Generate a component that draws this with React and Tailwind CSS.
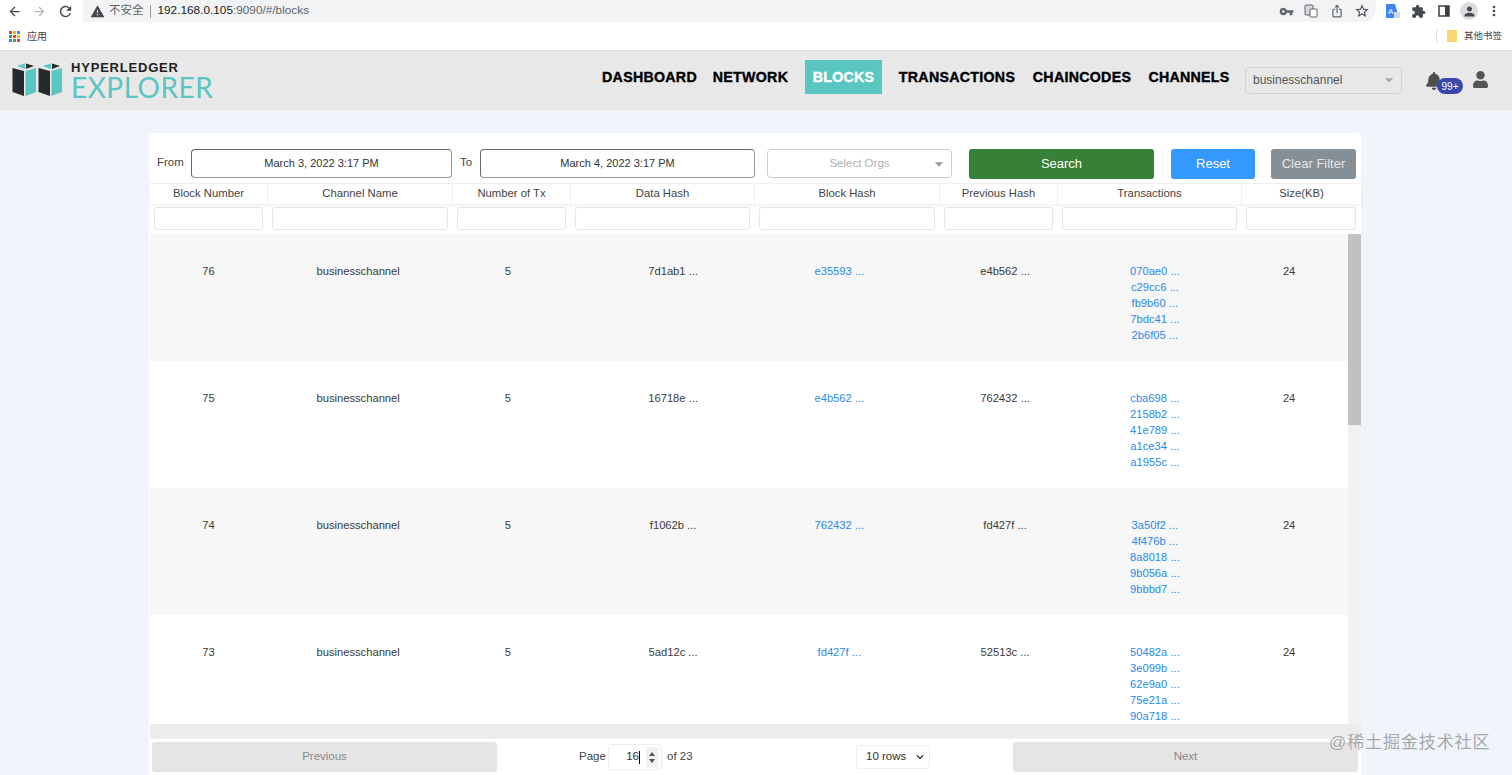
import React from "react";
import { MdArrowBack, MdArrowForward, MdRefresh, MdWarning, MdVpnKey, MdStarBorder, MdExtension, MdPerson, MdMoreVert, MdArrowDropDown, MdOutlineIosShare, MdKeyboardArrowDown } from "react-icons/md";
import { FaBell, FaUser } from "react-icons/fa";

const sans = "font-['Liberation_Sans','Noto_Sans_CJK_SC',sans-serif]";

const columns = ["Block Number", "Channel Name", "Number of Tx", "Data Hash", "Block Hash", "Previous Hash", "Transactions", "Size(KB)"];
const headWidths = ["w-[118px]", "w-[185px]", "w-[118px]", "w-[184px]", "w-[185px]", "w-[118px]", "w-[184px]", "w-[119px]"];

const rows = [
  { block: 76, data: "7d1ab1 ...", hash: "e35593 ...", prev: "e4b562 ...", txs: ["070ae0 ...", "c29cc6 ...", "fb9b60 ...", "7bdc41 ...", "2b6f05 ..."] },
  { block: 75, data: "16718e ...", hash: "e4b562 ...", prev: "762432 ...", txs: ["cba698 ...", "2158b2 ...", "41e789 ...", "a1ce34 ...", "a1955c ..."] },
  { block: 74, data: "f1062b ...", hash: "762432 ...", prev: "fd427f ...", txs: ["3a50f2 ...", "4f476b ...", "8a8018 ...", "9b056a ...", "9bbbd7 ..."] },
  { block: 73, data: "5ad12c ...", hash: "fd427f ...", prev: "52513c ...", txs: ["50482a ...", "3e099b ...", "62e9a0 ...", "75e21a ...", "90a718 ..."] },
];

const appDots = ["#ea4335", "#fbbc05", "#4285f4", "#34a853", "#ea4335", "#fbbc05", "#4285f4", "#34a853", "#ea4335"];

const BrowserBar = () => (
  <div className="h-[50px] bg-white flex flex-col">
    <div className="h-[22px] flex items-center text-[#5f6368]">
      <MdArrowBack className="ml-[7px] text-[15px] text-[#45484c]" />
      <MdArrowForward className="ml-[10px] text-[15px] text-[#b5b8bb]" />
      <MdRefresh className="ml-[10px] text-[17px] text-[#45484c]" />
      <div className="ml-[9px] w-[1293px] h-[22px] bg-[#f1f3f4] rounded-br-[14px] flex items-center pl-[7px]">
        <MdWarning className="text-[15px] text-[#45484c]" />
        <span className={`ml-[4px] text-[11.5px] text-[#5f6368] ${sans}`}>不安全</span>
        <span className="ml-[6px] h-[13px] w-px bg-[#9aa0a6]" />
        <span className={`ml-[7px] text-[11.8px] text-[#202124] ${sans}`}>
          192.168.0.105<span className="text-[#5f6368]">:9090/#/blocks</span>
        </span>
        <MdVpnKey className="ml-auto text-[15px] text-[#5f6368]" />
        <svg width="14" height="14" viewBox="0 0 14 14" className="ml-[10px]">
          <rect x="1" y="1" width="8" height="10" rx="1" fill="#d5d7da" stroke="#5f6368" />
          <rect x="6" y="5" width="7" height="8" rx="1" fill="#fff" stroke="#5f6368" />
        </svg>
        <MdOutlineIosShare className="ml-[12px] text-[14px] text-[#5f6368]" />
        <MdStarBorder className="ml-[10px] mr-[6px] text-[16px] text-[#45484c]" />
      </div>
      <svg width="14" height="15" viewBox="0 0 14 15" className="ml-[10px]">
        <path d="M0 0h9l4 14H0z" fill="#4285f4" />
        <text x="2" y="10" fontSize="8" fill="#fff" fontFamily="Liberation Sans">A</text>
        <path d="M8 8h6v6H8z" fill="#cfd8e6" />
      </svg>
      <MdExtension className="ml-[11px] text-[15px] text-[#45484c]" />
      <svg width="12" height="12" viewBox="0 0 12 12" className="ml-[12px]">
        <rect x="1" y="1" width="10" height="10" fill="none" stroke="#3c4043" strokeWidth="1.5" />
        <rect x="7" y="1" width="4" height="10" fill="#3c4043" />
      </svg>
      <div className="ml-[10px] w-[18px] h-[18px] rounded-full bg-[#dadce0] flex items-center justify-center">
        <MdPerson className="text-[15px] text-[#45484c]" />
      </div>
      <MdMoreVert className="ml-[8px] text-[16px] text-[#45484c]" />
    </div>
    <div className="h-[28px] flex items-center">
      <div className="ml-[9px] grid grid-cols-3 gap-[1px] w-[11px]">
        {appDots.map((c, i) => (
          <span key={i} className="w-[3px] h-[3px]" style={{ backgroundColor: c }} />
        ))}
      </div>
      <span className={`ml-[7px] text-[10px] text-[#444] ${sans}`}>应用</span>
      <span className="ml-auto h-[14px] w-px bg-[#dadce0]" />
      <svg width="10" height="12" viewBox="0 0 10 12" className="ml-[10px]">
        <rect width="10" height="12" rx="1" fill="#fbd774" />
      </svg>
      <span className={`ml-[7px] mr-[10px] text-[9.5px] text-[#444] ${sans}`}>其他书签</span>
    </div>
  </div>
);

const Logo = () => (
  <div className="flex items-center ml-[12px]">
    <svg width="52" height="34" viewBox="0 0 52 34">
      {[0, 26].map((x) => (
        <g key={x} transform={`translate(${x} 0)`}>
          <polygon points="0.5,5 12,8 12,33 0.5,29" fill="#262a2c" />
          <polygon points="13.5,8 24,5 24,29 13.5,33" fill="#59c6c1" />
          <polygon points="5,3 13,0.5 13,6" fill="#59c6c1" />
          <polygon points="14,0.5 22,3 14,6" fill="#262a2c" />
        </g>
      ))}
    </svg>
    <div className={`ml-[7px] w-[143px] flex flex-col ${sans}`}>
      <span className="text-[13px] leading-[14px] font-bold tracking-[0.8px] text-[#222] whitespace-nowrap">HYPERLEDGER</span>
      <span className="text-[28px] leading-[24px] font-['Lato',sans-serif] font-normal text-[#59c6c1] tracking-[0.5px] whitespace-nowrap">EXPLORER</span>
    </div>
  </div>
);

const NavItem = ({ label, active, className }) => (
  <div
    className={`h-[34px] pt-[1px] flex items-center justify-center whitespace-nowrap text-[14.2px] font-bold tracking-[0.3px] [-webkit-text-stroke:0.4px_currentColor] ${
      active ? "bg-[#59c6c1] text-white" : "text-black"
    } ${className}`}
  >
    {label}
  </div>
);

const Header = () => (
  <div className={`h-[60px] bg-[#e8e8e8] flex items-center shadow-[inset_0_1px_1px_rgba(0,0,0,0.05)] ${sans}`}>
    <Logo />
    <div className="ml-[389px] mb-[6px] flex items-center">
      <NavItem label="DASHBOARD" className="w-[93px]" />
      <NavItem label="NETWORK" className="ml-[17px] w-[75px]" />
      <NavItem label="BLOCKS" active className="ml-[17px] w-[77px]" />
      <NavItem label="TRANSACTIONS" className="ml-[16px] w-[118px]" />
      <NavItem label="CHAINCODES" className="ml-[16px] w-[100px]" />
      <NavItem label="CHANNELS" className="ml-[16px] w-[82px]" />
    </div>
    <div className="ml-[15px] w-[157px] h-[27px] border border-[#d2d2d2] rounded-[4px] flex items-center pl-[7px] text-[12px] text-[#555]">
      businesschannel
      <MdArrowDropDown className="ml-auto mr-[2px] text-[20px] text-[#aaa]" />
    </div>
    <div className="relative ml-[23px] w-[16px] h-[20px]">
      <FaBell className="text-[18px] text-[#4f4f4f] mt-[2px]" />
      <span className="absolute left-[12px] top-[8px] w-[26px] h-[16px] rounded-full bg-[#3949ab] text-white text-[10px] flex items-center justify-center">
        99+
      </span>
    </div>
    <FaUser className="ml-[31px] mb-[2px] text-[17px] text-[#555]" />
  </div>
);

const FilterBar = () => (
  <div className="h-[50px] flex items-start pt-[16px] text-[12px]">
    <span className="ml-[7px] mt-[5px] w-[34px] text-[#444] text-[11.5px]">From</span>
    <div className="w-[261px] h-[29px] border border-[#9a9a9a] border-t-[#666] border-l-[#666] rounded-[4px] flex items-center justify-center text-[#333] text-[11px]">
      March 3, 2022 3:17 PM
    </div>
    <span className="ml-[8px] mt-[5px] w-[20px] text-[#444] text-[11.5px]">To</span>
    <div className="w-[275px] h-[29px] border border-[#9a9a9a] border-t-[#666] border-l-[#666] rounded-[4px] flex items-center justify-center text-[#333] text-[11px]">
      March 4, 2022 3:17 PM
    </div>
    <div className="ml-[12px] w-[185px] h-[29px] border border-[#ccc] rounded-[4px] flex items-center text-[#b0b0b0] text-[11.5px] relative">
      <span className="w-full text-center">Select Orgs</span>
      <MdArrowDropDown className="absolute right-[2px] text-[20px] text-[#999]" />
    </div>
    <button className="ml-[17px] w-[185px] h-[30px] bg-[#388038] text-white text-[13px] rounded-[3px]">Search</button>
    <button className="ml-[17px] w-[84px] h-[30px] bg-[#3399ff] text-white text-[13px] rounded-[3px]">Reset</button>
    <button className="ml-[16px] w-[85px] h-[30px] bg-[#868e96] text-[#e4e6e8] text-[13px] rounded-[3px]">Clear Filter</button>
  </div>
);

const TableHead = () => (
  <>
    <div className="flex h-[21px] border-t border-[#f0f0f0] shadow-[0_2px_4px_rgba(0,0,0,0.06)]">
      {columns.map((c, i) => (
        <div key={c} className={`${headWidths[i]} shrink-0 pb-[1px] flex items-center justify-center text-[11.3px] text-[#444] border-r border-[#f1f1f1] last:border-r-0`}>
          {c}
        </div>
      ))}
    </div>
    <div className="flex h-[30px] pt-[3px]">
      {columns.map((c, i) => (
        <div key={c} className={`${headWidths[i]} shrink-0 pl-[4px] pr-[5px]`}>
          <div className="w-full h-[23px] bg-white border border-[#e6e6e6] rounded-[3px]" />
        </div>
      ))}
    </div>
  </>
);

const Row = ({ row, striped }) => (
  <div className={`h-[127px] shrink-0 flex pt-[29px] text-[11.2px] leading-[16px] text-center text-[#3a3a3a] ${striped ? "bg-[#f7f7f7]" : "bg-white"}`}>
    <div className="w-[116px] pl-[1px]">{row.block}</div>
    <div className="w-[184px] pl-[1px]">businesschannel</div>
    <div className="w-[116px] pl-[1px]">5</div>
    <div className="w-[184px] pl-[32px]">{row.data}</div>
    <div className="w-[184px] pr-[3px] text-[#2a8ae8]">{row.hash}</div>
    <div className="w-[116px] pl-[29px]">{row.prev}</div>
    <div className="w-[184px] pl-[29px] text-[#2a8ae8]">
      {row.txs.map((t) => (
        <div key={t}>{t}</div>
      ))}
    </div>
    <div className="w-[116px] pr-[2px]">24</div>
  </div>
);

const Pagination = () => (
  <div className="h-[37px] flex items-center text-[11.5px] text-[#444] border-t border-[#f2f2f2] whitespace-nowrap">
    <button className="ml-[2px] w-[345px] h-[30px] bg-[#e5e5e5] rounded-[3px] text-[#8a8a8a]">Previous</button>
    <span className="ml-[82px] w-[26px]">Page</span>
    <div className="ml-[3px] w-[54px] h-[26px] border border-[#eee] rounded-[3px] bg-white flex items-center justify-end pr-[3px] text-[#333]">
      <span>16</span>
      <span className="w-px h-[13px] bg-black" />
      <span className="ml-[6px] w-[12px] h-[20px] bg-[#f1f1f1] flex flex-col items-center justify-center gap-[3px]">
        <span className="w-0 h-0 border-x-[3px] border-x-transparent border-b-[4px] border-b-[#555]" />
        <span className="w-0 h-0 border-x-[3px] border-x-transparent border-t-[4px] border-t-[#555]" />
      </span>
    </div>
    <span className="ml-[5px] w-[25px]">of 23</span>
    <div className="ml-[164px] w-[74px] h-[24px] border border-[#eee] rounded-[3px] bg-white flex items-center pl-[9px] text-[#333]">
      10 rows
      <MdKeyboardArrowDown className="ml-auto mr-[2px] text-[14px] text-[#111]" />
    </div>
    <button className="ml-[83px] w-[345px] h-[30px] bg-[#e5e5e5] rounded-[3px] text-[#8a8a8a]">Next</button>
  </div>
);

const App = () => (
  <div className={`w-[1512px] h-[775px] overflow-hidden bg-[#f0f5fb] relative ${sans}`}>
    <BrowserBar />
    <Header />
    <div className="pt-[23px] pl-[149px]">
      <div className="w-[1212px] h-[642px] bg-white rounded-t-[3px] pl-[1px] flex flex-col">
        <FilterBar />
        <TableHead />
        <div className="h-[490px] flex overflow-hidden">
          <div className="w-[1198px] flex flex-col">
            {rows.map((row, i) => (
              <Row key={row.block} row={row} striped={i % 2 === 0} />
            ))}
          </div>
          <div className="w-[13px] bg-[#f1f1f1]">
            <div className="h-[191px] bg-[#c1c1c1]" />
          </div>
        </div>
        <div className="h-[14px] bg-[#ececec]" />
        <Pagination />
      </div>
    </div>
    <span className="absolute left-[1329px] top-[730px] text-[17px] tracking-[0.9px] text-[#a8a8a8]">@稀土掘金技术社区</span>
  </div>
);

export default App;
